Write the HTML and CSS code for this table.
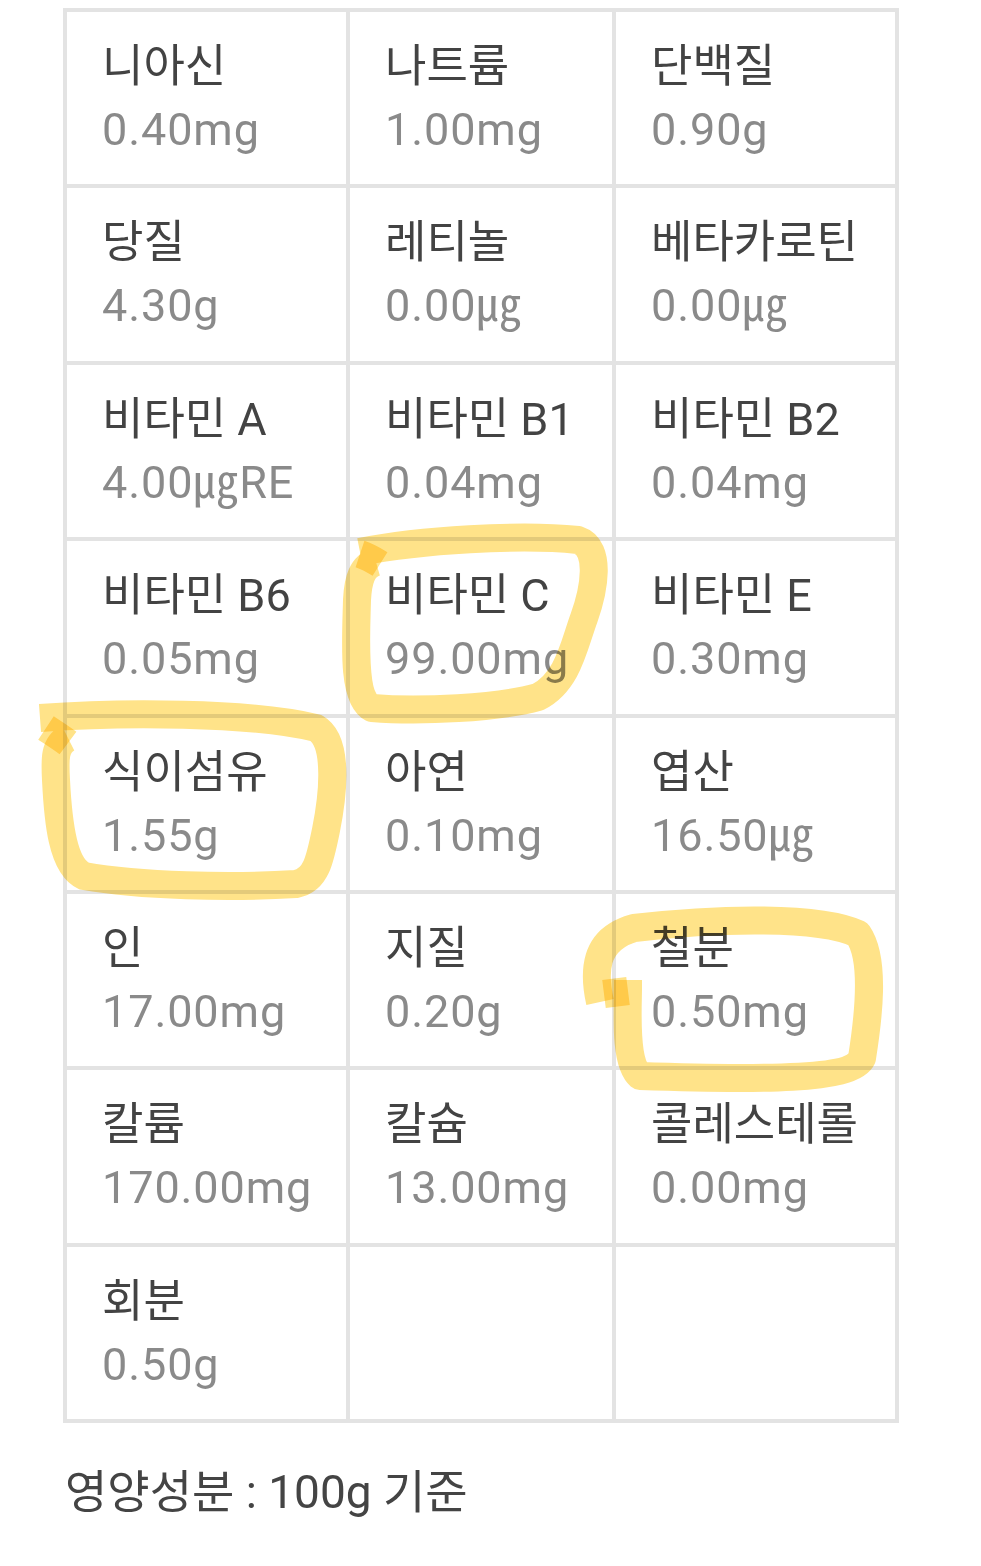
FILE: index.html
```html
<!DOCTYPE html>
<html lang="ko">
<head>
<meta charset="utf-8">
<title>영양성분</title>
<link rel="stylesheet" href="styles.css">
</head>
<body>
<div class="page">
  <div class="grid">
    <div class="cell"><div class="name">니아신</div><div class="val">0.40mg</div></div>
    <div class="cell"><div class="name">나트륨</div><div class="val">1.00mg</div></div>
    <div class="cell"><div class="name">단백질</div><div class="val">0.90g</div></div>

    <div class="cell"><div class="name">당질</div><div class="val">4.30g</div></div>
    <div class="cell"><div class="name">레티놀</div><div class="val">0.00㎍</div></div>
    <div class="cell"><div class="name">베타카로틴</div><div class="val">0.00㎍</div></div>

    <div class="cell"><div class="name">비타민 A</div><div class="val">4.00㎍RE</div></div>
    <div class="cell"><div class="name">비타민 B1</div><div class="val">0.04mg</div></div>
    <div class="cell"><div class="name">비타민 B2</div><div class="val">0.04mg</div></div>

    <div class="cell"><div class="name">비타민 B6</div><div class="val">0.05mg</div></div>
    <div class="cell"><div class="name">비타민 C</div><div class="val">99.00mg</div></div>
    <div class="cell"><div class="name">비타민 E</div><div class="val">0.30mg</div></div>

    <div class="cell"><div class="name">식이섬유</div><div class="val">1.55g</div></div>
    <div class="cell"><div class="name">아연</div><div class="val">0.10mg</div></div>
    <div class="cell"><div class="name">엽산</div><div class="val">16.50㎍</div></div>

    <div class="cell"><div class="name">인</div><div class="val">17.00mg</div></div>
    <div class="cell"><div class="name">지질</div><div class="val">0.20g</div></div>
    <div class="cell"><div class="name">철분</div><div class="val">0.50mg</div></div>

    <div class="cell"><div class="name">칼륨</div><div class="val">170.00mg</div></div>
    <div class="cell"><div class="name">칼슘</div><div class="val">13.00mg</div></div>
    <div class="cell"><div class="name">콜레스테롤</div><div class="val">0.00mg</div></div>

    <div class="cell"><div class="name">회분</div><div class="val">0.50g</div></div>
    <div class="cell"></div>
    <div class="cell"></div>
  </div>
  <p class="basis">영양성분 : 100g 기준</p>
</div>

<svg class="marks" width="981" height="1566" viewBox="0 0 981 1566" aria-hidden="true">
  <!-- 비타민 C -->
  <path class="hl" d="M 360 552 C 420 540, 520 534, 578 540 C 602 548, 594 590, 584 618 C 574 645, 568 682, 538 697 C 498 708, 420 712, 372 708 C 352 698, 356 640, 357 600 C 358 580, 362 566, 376 562"/>
  <path class="hl" d="M 360 554 C 366 556, 372 559, 380 564"/>
  <!-- 식이섬유 -->
  <path class="hl" d="M 40 718 C 120 712, 250 712, 316 728 C 340 742, 332 800, 326 830 C 320 860, 316 880, 296 884 C 230 888, 140 886, 84 876 C 62 866, 58 820, 56 780 C 55 760, 54 745, 68 738"/>
  <path class="hl" d="M 46 728 C 52 732, 60 737, 68 743"/>
  <!-- 철분 -->
  <path class="hl" d="M 600 1002 C 594 975, 592 940, 634 928 C 720 918, 820 916, 858 934 C 876 960, 868 1020, 862 1058 C 852 1080, 760 1080, 640 1076 C 624 1062, 628 1010, 628 988 L 628 980"/>
  <path class="hl" d="M 604 994 L 628 991"/>
</svg>
</body>
</html>
```

FILE: styles.css
```css
html, body {
  margin: 0;
  padding: 0;
  background: #ffffff;
}

body {
  font-family: Roboto, "Noto Sans CJK KR", sans-serif;
  position: relative;
  width: 981px;
  min-height: 1566px;
}

.page {
  padding: 8px 0 0 63px;
}

.grid {
  display: grid;
  grid-template-columns: 279px 262px 279px;
  grid-template-rows: repeat(8, 172.4px);
  gap: 4px;
  padding: 4px;
  width: max-content;
  background: #e3e3e3;
}

.cell {
  background: #ffffff;
  padding: 23px 0 0 35px;
  font-size: 45px;
  line-height: 63px;
  white-space: nowrap;
}

.name {
  color: #434343;
}

.val {
  color: #8a8a8a;
  letter-spacing: 0.9px;
}

.basis {
  margin: 39px 0 0 2px;
  font-size: 46px;
  line-height: 60px;
  color: #444444;
}

.marks {
  position: absolute;
  top: 0;
  left: 0;
  pointer-events: none;
  mix-blend-mode: multiply;
}

.hl {
  fill: none;
  stroke: #ffe389;
  stroke-width: 28;
  stroke-linecap: butt;
  stroke-linejoin: round;
  mix-blend-mode: multiply;
}
```
